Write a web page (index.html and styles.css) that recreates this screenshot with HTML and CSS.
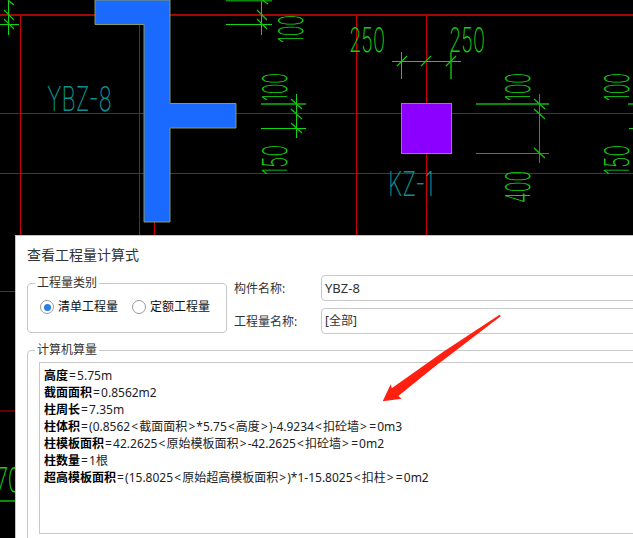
FILE: index.html
```html
<!DOCTYPE html>
<html lang="zh-CN">
<head>
  <meta charset="UTF-8" />
  <title>查看工程量计算式</title>
  <link rel="stylesheet" href="styles.css">
</head>
<body>
  <svg class="cad" width="633" height="538" viewBox="0 0 633 538">
    <path class="axis-thick" d="M0 15H633" />
    <path class="axis" d="M0 113.5H633M0 173.5H633M0 291.5H16M0 411H16M20.5 15V236M139.5 25V236M154.5 222V236M356.5 15V236M426.5 15V236" />

    <polygon class="wall" points="95,0 170,0 170,103.5 236,103.5 236,128 170,128 170,222 144,222 144,24.5 95,24.5" />
    <rect class="column" x="401.5" y="103.5" width="50" height="50" />

    <path class="dim-line" d="M8.5 0V35M0 24.5H19M261.5 0V35M226 24.5H272M296.5 94V138M261 128.5H306M401.5 52V79M392 61.5H461M629 128.5H633" />
    <path class="dim-thin" d="M476 153.5H549M539.5 94V163" />
    <path class="dim-dark" d="M226 0.5H272M261 104H306M476 104H549M451 52V79M628 104H633M0 501H16" />
    <path class="tick" d="M4 10L14 20M4 19L14 29M8 0L14 5M257 10L267 20M257 19L267 29M262 0L268 4M291 99L302 109M291 109L302 119M291 123L302 133M534 99L545 109M534 109L545 119M534 148L545 158" />
    <path class="tick" d="M397 66L407 56M421 66L431 56M446 66L456 56" />

    <text class="dim-text" transform="translate(303,43) rotate(-90)" textLength="28" lengthAdjust="spacingAndGlyphs">100</text>
    <text class="dim-text" transform="translate(287,101) rotate(-90)" textLength="28" lengthAdjust="spacingAndGlyphs">100</text>
    <text class="dim-text" transform="translate(287,175) rotate(-90)" textLength="30" lengthAdjust="spacingAndGlyphs">150</text>
    <text class="dim-text" transform="translate(530,101) rotate(-90)" textLength="28" lengthAdjust="spacingAndGlyphs">100</text>
    <text class="dim-text" transform="translate(530,203) rotate(-90)" textLength="32" lengthAdjust="spacingAndGlyphs">400</text>
    <text class="dim-text" transform="translate(629,101) rotate(-90)" textLength="28" lengthAdjust="spacingAndGlyphs">100</text>
    <text class="dim-text" transform="translate(629,175) rotate(-90)" textLength="30" lengthAdjust="spacingAndGlyphs">150</text>
    <text class="dim-text" x="349" y="52" textLength="36" lengthAdjust="spacingAndGlyphs">250</text>
    <text class="dim-text" x="449" y="52" textLength="36" lengthAdjust="spacingAndGlyphs">250</text>
    <text class="dim-text" x="-4" y="492" textLength="25" lengthAdjust="spacingAndGlyphs">70</text>

    <text class="tag-text" x="47" y="111" textLength="65" lengthAdjust="spacingAndGlyphs">YBZ-8</text>
    <text class="tag-text" x="388" y="196" textLength="46" lengthAdjust="spacingAndGlyphs">KZ-1</text>
  </svg>

  <div class="dialog">
    <div class="dialog-title">查看工程量计算式</div>

    <div class="top-row">
      <fieldset class="group type-group">
        <legend>工程量类别</legend>
        <div class="radio-row">
          <span class="radio checked"></span><span class="radio-label">清单工程量</span>
          <span class="radio"></span><span class="radio-label">定额工程量</span>
        </div>
      </fieldset>
      <div class="fields">
        <div class="field"><label>构件名称:</label><div class="input input-name">YBZ-8</div></div>
        <div class="field"><label>工程量名称:</label><div class="input">[全部]</div></div>
      </div>
    </div>

    <fieldset class="group calc-group">
      <legend>计算机算量</legend>
      <div class="calc-text">
        <div><b>高度</b><i>=</i>5.75m</div>
        <div><b>截面面积</b><i>=</i>0.8562m2</div>
        <div><b>柱周长</b><i>=</i>7.35m</div>
        <div><b>柱体积</b><i>=</i>(0.8562<i>&lt;</i>截面面积<i>&gt;</i>*5.75<i>&lt;</i>高度<i>&gt;</i>)-4.9234<i>&lt;</i>扣砼墙<i>&gt;</i><i>=</i>0m3</div>
        <div><b>柱模板面积</b><i>=</i>42.2625<i>&lt;</i>原始模板面积<i>&gt;</i>-42.2625<i>&lt;</i>扣砼墙<i>&gt;</i><i>=</i>0m2</div>
        <div><b>柱数量</b><i>=</i>1根</div>
        <div><b>超高模板面积</b><i>=</i>(15.8025<i>&lt;</i>原始超高模板面积<i>&gt;</i>)*1-15.8025<i>&lt;</i>扣柱<i>&gt;</i><i>=</i>0m2</div>
      </div>
    </fieldset>
  </div>

  <svg class="arrow" width="633" height="538" viewBox="0 0 633 538">
    <polygon points="499.5,314.8 501,316 450,355 436.7,365 398.3,396 401.7,398.7 382.7,401.3 390.7,384.3 391.7,388.3 443.3,351.7" />
  </svg>
</body>
</html>
```

FILE: styles.css
```css
html, body {
  margin: 0;
  height: 100%;
}

body {
  position: relative;
  width: 633px;
  height: 538px;
  overflow: hidden;
  background: #000;
  font-family: "Noto Sans", "Noto Sans CJK SC", sans-serif;
  font-size: 12px;
  color: #222;
}

/* drawing behind the dialog */
.cad {
  position: absolute;
  top: 0;
  left: 0;
}

.axis {
  stroke: #c80000;
  stroke-width: 1;
  fill: none;
}

.axis-thick {
  stroke: #a00808;
  stroke-width: 2;
  fill: none;
}

.wall {
  fill: #1a6aff;
  stroke: #8a9a5a;
  stroke-width: 1;
}

.column {
  fill: #8c00ff;
  stroke: #b070b0;
  stroke-width: 1;
}

.dim-line {
  stroke: #10d810;
  stroke-width: 1;
  fill: none;
}

.dim-thin {
  stroke: #0caa0c;
  stroke-width: 1;
  fill: none;
}

.dim-dark {
  stroke: #0a8a0a;
  stroke-width: 2;
  fill: none;
}

.tick {
  stroke: #10c810;
  stroke-width: 1.2;
  fill: none;
}

.dim-text {
  font-family: "Inter", "Roboto", sans-serif;
  font-weight: 200;
  font-size: 34px;
  fill: #14d014;
}

.tag-text {
  font-family: "Inter", "Roboto", sans-serif;
  font-weight: 200;
  font-size: 34px;
  fill: #0a9292;
}

.dialog {
  position: absolute;
  top: 235px;
  left: 15px;
  width: 700px;
  height: 320px;
  box-sizing: border-box;
  padding: 9px 0 0 11px;
  background: #fff;
  border-top: 1px solid #c4c4c4;
  border-left: 1px solid #c4c4c4;
}

.dialog-title {
  font-size: 14px;
  line-height: 20px;
  color: #333;
  margin-bottom: 10px;
}

.top-row {
  display: flex;
  height: 58px;
}

.group {
  margin: 0;
  padding: 0;
  border: 1px solid #c8c8c8;
  border-radius: 4px;
  box-sizing: border-box;
}

.group legend {
  margin-left: 7px;
  padding: 0 2px;
  font-size: 12px;
  line-height: 16px;
  color: #333;
}

.type-group {
  flex: none;
  width: 200px;
  height: 58px;
}

.radio-row {
  display: flex;
  align-items: center;
  margin: 8px 0 0 12px;
}

.radio {
  flex: none;
  width: 14px;
  height: 14px;
  box-sizing: border-box;
  border: 1px solid #999;
  border-radius: 50%;
  margin-right: 4px;
  display: flex;
  align-items: center;
  justify-content: center;
}

.radio.checked::after {
  content: "";
  width: 7px;
  height: 7px;
  border-radius: 50%;
  background: #2a7de1;
}

.radio-label {
  margin-right: 14px;
  color: #111;
  line-height: 16px;
  white-space: nowrap;
}

.fields {
  display: flex;
  flex-direction: column;
  gap: 7px;
  margin-left: 7px;
  width: 500px;
}

.field {
  display: flex;
  align-items: center;
}

.field label {
  width: 87px;
  color: #333;
}

.input {
  flex: 1;
  height: 26px;
  line-height: 24px;
  box-sizing: border-box;
  border: 1px solid #c8c8c8;
  border-radius: 4px;
  padding-left: 3px;
  color: #333;
}

.input-name {
  font-size: 13px;
}

.calc-group {
  width: 660px;
  height: 220px;
  margin-top: 9px;
}

.calc-text {
  height: 172px;
  margin: 4px 0 0 11px;
  box-sizing: border-box;
  padding: 4px 0 0 4px;
  border: 1px solid #c8c8c8;
  line-height: 17px;
  white-space: nowrap;
  color: #222;
}

.calc-text b {
  font-weight: 700;
  color: #000;
}

/* = < > sit wider in the original font */
.calc-text i {
  font-style: normal;
  padding: 0 1.1px;
}

/* red annotation drawn over everything */
.arrow {
  position: absolute;
  top: 0;
  left: 0;
  pointer-events: none;
}

.arrow polygon {
  fill: #ff2012;
}
```
